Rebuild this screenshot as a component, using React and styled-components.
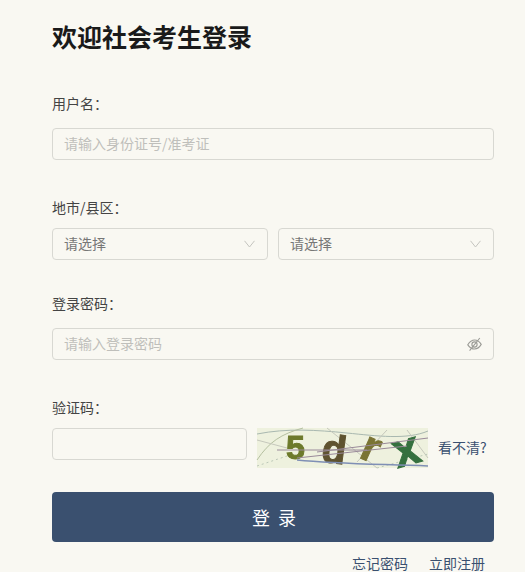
import React from "react";
import styled, { createGlobalStyle } from "styled-components";

const GlobalStyle = createGlobalStyle`
    html, body {
        margin: 0;
        background: #f9f8f2;
        font-family: "Noto Sans CJK SC", "Liberation Sans", sans-serif;
    }
`;

const Chevron = () => (
    <svg width="11" height="8" viewBox="0 0 11 8" fill="none" stroke="#c4c4bf" strokeWidth="1">
        <path d="M0.5 0.8 L5.5 7 L10.5 0.8" />
    </svg>
);

const HiddenEye = () => (
    <svg width="15" height="15" viewBox="0 0 15 15" fill="none" stroke="#9a9a95" strokeWidth="1.1">
        <path d="M0.8 7.8 C3 4.2 5.4 3 7.6 3 C9.8 3 12.2 4.2 14.2 7.4 C12.2 10.8 9.8 12 7.4 12 C5.2 12 3 10.8 0.8 7.8 Z" />
        <circle cx="7.5" cy="7.5" r="2.6" />
        <path d="M2.6 13.6 L12.8 1" />
    </svg>
);

const App = () => {
    return (
        <Page>
            <GlobalStyle />
            <Title>欢迎社会考生登录</Title>
            <Field $top={37}>
                <Label>用户名：</Label>
                <InputBox>
                    <Input placeholder="请输入身份证号/准考证" />
                </InputBox>
            </Field>
            <Field $top={36} $tight>
                <Label>地市/县区：</Label>
                <SelectRow>
                    <Select>
                        <span>请选择</span>
                        <Chevron />
                    </Select>
                    <Select>
                        <span>请选择</span>
                        <Chevron />
                    </Select>
                </SelectRow>
            </Field>
            <Field $top={32}>
                <Label>登录密码：</Label>
                <InputBox>
                    <Input placeholder="请输入登录密码" />
                    <HiddenEye />
                </InputBox>
            </Field>
            <Field $top={36} $tight>
                <Label>验证码：</Label>
                <CaptchaRow>
                    <CaptchaInput />
                    <Captcha />
                    <RefreshLink>看不清?</RefreshLink>
                </CaptchaRow>
            </Field>
            <LoginButton>登 录</LoginButton>
            <FooterLinks>
                <FooterLink>忘记密码</FooterLink>
                <FooterLink>立即注册</FooterLink>
            </FooterLinks>
        </Page>
    );
};

const Captcha = () => (
    <CaptchaImage viewBox="0 0 171 40" width="171" height="40">
        <rect width="171" height="40" fill="#eef1de" />
        <path d="M0 6 C30 0 60 2 90 5 S150 12 171 3" stroke="#a9b8b0" fill="none" />
        <path d="M0 32 C12 14 24 6 46 0" stroke="#b5c0a0" fill="none" />
        <path d="M70 0 L120 40 M130 2 L100 34 M150 2 L171 30 M0 12 L30 20" stroke="#c6c8bc" fill="none" />
        <path d="M0 38 L30 28 M120 40 L171 26" stroke="#bcc8b8" fill="none" strokeDasharray="2 3" />
        <CaptchaChar x="29" y="31" $size={34} fill="#6d7a2c" stroke="#6d7a2c">5</CaptchaChar>
        <CaptchaChar x="65" y="35" $size={40} fill="#5f5330" stroke="#5f5330" transform="rotate(8 77 22)">d</CaptchaChar>
        <CaptchaChar x="104" y="34" $size={44} fill="#7a7434" stroke="#7a7434" transform="rotate(24 114 24)">r</CaptchaChar>
        <CaptchaChar x="137" y="37" $size={48} fill="#35703f" stroke="#35703f" transform="rotate(-16 150 26)">x</CaptchaChar>
        <path d="M20 22 H110 M60 24 L171 10 M40 30 L150 18" stroke="#9a8a9a" fill="none" />
        <path d="M40 32 C80 36 120 36 171 38" stroke="#7f8fb5" fill="none" strokeWidth="1.5" />
    </CaptchaImage>
);

const Page = styled.div`
    width: 525px;
    height: 572px;
    box-sizing: border-box;
    padding: 17px 31px 0 52px;
    overflow: hidden;
    background: #f9f8f2;
`;
const Title = styled.h1`
    margin: 0;
    height: 38px;
    line-height: 38px;
    font-size: 25px;
    font-weight: 700;
    color: #1a1a1a;
`;
const Field = styled.div`
    display: flex;
    flex-direction: column;
    gap: ${(props) => (props.$tight ? "8px" : "12px")};
    margin-top: ${(props) => props.$top}px;
`;
const Label = styled.label`
    height: 24px;
    line-height: 22px;
    font-size: 14px;
    color: #444;
`;
const InputBox = styled.div`
    display: flex;
    align-items: center;
    height: 32px;
    box-sizing: border-box;
    padding: 0 11px 0 11px;
    border: 1px solid #d8d8d2;
    border-radius: 4px;
`;
const Input = styled.input`
    flex: 1;
    min-width: 0;
    padding: 0 0 2px;
    border: none;
    outline: none;
    background: transparent;
    font: inherit;
    font-size: 14px;
    &::placeholder {
        color: #bfbfbb;
    }
`;
const SelectRow = styled.div`
    display: flex;
    gap: 10px;
`;
const Select = styled.div`
    flex: 1;
    display: flex;
    align-items: center;
    justify-content: space-between;
    height: 32px;
    box-sizing: border-box;
    padding: 0 12px 0 12px;
    border: 1px solid #d8d8d2;
    border-radius: 4px;
    font-size: 14px;
    line-height: 28px;
    color: #777;
    span {
        margin-left: -1px;
        padding-bottom: 2px;
    }
`;
const CaptchaRow = styled.div`
    display: flex;
    align-items: flex-start;
    height: 40px;
`;
const CaptchaInput = styled.input`
    width: 195px;
    height: 32px;
    box-sizing: border-box;
    border: 1px solid #d8d8d2;
    border-radius: 4px;
    outline: none;
    background: transparent;
`;
const CaptchaImage = styled.svg`
    display: block;
    margin-left: 10px;
    overflow: visible;
    filter: blur(0.4px);
`;
const CaptchaChar = styled.text`
    font-family: "Liberation Sans", sans-serif;
    font-size: ${(props) => props.$size}px;
    font-weight: 700;
`;
const RefreshLink = styled.a`
    margin-left: 10px;
    line-height: 38px;
    font-size: 14px;
    color: #3a5070;
`;
const LoginButton = styled.button`
    display: block;
    width: 100%;
    height: 50px;
    margin-top: 24px;
    padding: 0 0 0 4px;
    border: none;
    border-radius: 4px;
    background: #3a506f;
    color: #fff;
    font: inherit;
    font-size: 18px;
    letter-spacing: 2px;
`;
const FooterLinks = styled.div`
    display: flex;
    justify-content: flex-end;
    gap: 21px;
    margin-top: 10px;
    padding-right: 9px;
    margin-left: -1px;
`;
const FooterLink = styled.a`
    line-height: 22px;
    font-size: 14px;
    color: #3a5070;
    &:first-child {
        margin-left: -1px;
    }
    &:last-child {
        margin-right: 0;
    }
`;

export default App;
